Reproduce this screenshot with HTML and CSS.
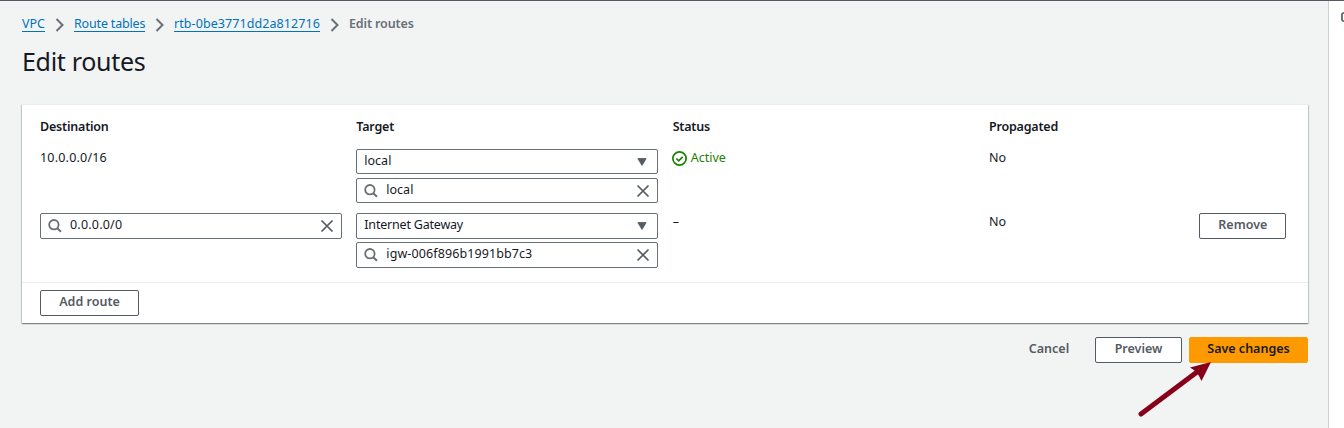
FILE: index.html
```html
<!DOCTYPE html>
<html lang="en">
<head>
<meta charset="utf-8">
<title>Edit routes</title>
<link rel="stylesheet" href="styles.css">
</head>
<body>
<svg class="defs" aria-hidden="true">
  <symbol id="chevron" viewBox="0 0 10 14"><path d="M1.5 1l6 6-6 6" fill="none" stroke="#687078" stroke-width="2"/></symbol>
  <symbol id="search" viewBox="0 0 14 14"><circle cx="5.900" cy="5.700" r="4.700" fill="none" stroke="#687078" stroke-width="1.8"/><path d="M9.2 9.2l3.8 3.5" fill="none" stroke="#687078" stroke-width="2"/></symbol>
  <symbol id="close" viewBox="0 0 14 14"><path d="M1.500 1.500l11 11M12.500 1.500l-11 11" fill="none" stroke="#545b64" stroke-width="1.7"/></symbol>
  <symbol id="caret" viewBox="0 0 10 8"><path d="M.8.5h8.400L5 7.500z" fill="#545b64" stroke="#545b64" stroke-width=".8" stroke-linejoin="round"/></symbol>
</svg>
<div class="app">
  <main class="main">
    <nav class="breadcrumbs">
      <a class="crumb crumb-vpc">VPC</a><svg class="chevron"><use href="#chevron"/></svg>
      <a class="crumb crumb-tables">Route tables</a><svg class="chevron"><use href="#chevron"/></svg>
      <a class="crumb crumb-id">rtb-0be3771dd2a812716</a><svg class="chevron"><use href="#chevron"/></svg>
      <span class="current">Edit routes</span>
    </nav>
    <h1 class="title">Edit routes</h1>
    <section class="card">
      <div class="routes">
        <div class="row head"><span>Destination</span><span>Target</span><span>Status</span><span>Propagated</span></div>
        <div class="row first">
          <div class="cell cidr">10.0.0.0/16</div>
          <div class="stack">
            <div class="field"><span class="value">local</span><svg class="caret"><use href="#caret"/></svg></div>
            <div class="field"><svg class="search"><use href="#search"/></svg><span class="value">local</span><svg class="close"><use href="#close"/></svg></div>
          </div>
          <div class="cell active"><svg class="check" viewBox="0 0 14 14"><circle cx="7" cy="7" r="6.200" fill="none" stroke="#1d8102" stroke-width="1.600"/><path d="M4 7l2.200 2.200L10 5.400" fill="none" stroke="#1d8102" stroke-width="1.600"/></svg><span>Active</span></div>
          <div class="cell">No</div>
        </div>
        <div class="row second">
          <div class="field"><svg class="search"><use href="#search"/></svg><span class="value zero">0.0.0.0/0</span><svg class="close"><use href="#close"/></svg></div>
          <div class="stack">
            <div class="field"><span class="value gateway">Internet Gateway</span><svg class="caret"><use href="#caret"/></svg></div>
            <div class="field"><svg class="search"><use href="#search"/></svg><span class="value igw">igw-006f896b1991bb7c3</span><svg class="close"><use href="#close"/></svg></div>
          </div>
          <div class="cell">–</div>
          <div class="cell">No</div>
          <button class="button remove">Remove</button>
        </div>
      </div>
      <div class="card-footer"><button class="button add">Add route</button></div>
    </section>
    <div class="actions"><button class="button cancel">Cancel</button><button class="button preview">Preview</button><button class="button save">Save changes</button></div>
  </main>
  <aside class="help"><svg class="info" viewBox="0 0 3 10"><path d="M4 1H2L1 2v6l1 1h2" fill="none" stroke="#545b64" stroke-width="1.700"/></svg></aside>
</div>
<svg class="arrow" viewBox="0 0 78 60"><path d="M6 54L62 12" stroke="#870019" stroke-width="5" stroke-linecap="round"/><path d="M76 2L55 7.500l6 4 3 4.500 2.500 5z" fill="#870019"/></svg>
</body>
</html>
```
FILE: styles.css
```css
* { box-sizing: border-box; }
body { margin: 0; overflow: hidden; background: #f2f3f3; color: #16191f; font: 12.5px/20px "Noto Sans", "Open Sans", sans-serif; }
svg { display: block; flex: none; }
.defs { display: none; }
.app { display: flex; height: 428px; border-top: 1px solid #545b64; }
.main { flex: 1; padding: 13px 21px 0 22px; }
.help { width: 15px; background: #fff; box-shadow: -1px 0 #ccd1d1; padding-top: 11px; }
.info { width: 3px; height: 10px; margin-left: auto; }
.breadcrumbs { display: flex; height: 20px; white-space: nowrap; }
.crumb { color: #0073bb; height: 18px; line-height: 19px; border-bottom: 1px solid #0073bb; }
.crumb-vpc { width: 23px; }
.crumb-tables { width: 71px; letter-spacing: -.17px; }
.crumb-id { width: 146px; letter-spacing: .08px; }
.chevron { width: 10px; height: 14px; margin: 4px 9px 0 10px; }
.current { color: #687078; font-weight: 600; line-height: 20px; letter-spacing: -.12px; }
.title { margin: 9px 0 0; font-size: 25px; line-height: 36px; font-weight: 400; letter-spacing: -.3px; }
.card { height: 219px; margin-top: 25px; background: #fff; border-top: 1px solid #eaeded; box-shadow: 0 1px 1px rgba(0,28,36,.3), 1px 1px 1px rgba(0,28,36,.15), -1px 1px 1px rgba(0,28,36,.15); }
.routes { height: 177px; padding: 12px 18px 0; }
.row { display: grid; grid-template-columns: 302px 302px 302px 196px 87px; column-gap: 14.333px; }
.row > * { align-self: start; }
.head { height: 32px; font-weight: 600; letter-spacing: -.2px; }
.first { height: 64px; }
.first .field { height: 25px; }
.first .stack { gap: 4px; }
.cell { margin-top: -1px; }
.cidr, .zero { letter-spacing: .2px; }
.gateway { letter-spacing: -.2px; }
.igw { letter-spacing: .1px; }
.stack { display: flex; flex-direction: column; gap: 3px; }
.field { height: 26px; display: flex; align-items: center; border: 1px solid #687078; border-radius: 2px; padding: 0 7px; background: #fff; }
.value { flex: 1; line-height: 20px; margin-top: -2px; }
.search { width: 14px; height: 14px; margin: 0 8.500px 0 -.5px; }
.close { width: 14px; height: 14px; }
.caret { width: 10px; height: 8px; margin-right: 3px; }
.active { display: flex; gap: 4px; margin-left: -1px; color: #1d8102; }
.check { width: 15px; height: 15px; margin-top: 3px; }
.card-footer { border-top: 1px solid #eaeded; padding: 7px 18px; }
.button { display: block; height: 26px; margin: 0; padding: 0 0 2px; border: 1px solid #545b64; border-radius: 2px; background: #fff; color: #545b64; font: 600 12.5px/20px "Noto Sans", sans-serif; white-space: nowrap; }
.remove { width: 87px; }
.add { width: 99px; }
.actions { display: flex; justify-content: flex-end; margin-top: 14px; }
.cancel { width: 86px; border-color: transparent; background: transparent; margin-right: 3px; }
.preview { width: 87px; margin-right: 7px; }
.save { width: 119px; background: #f90; border-color: #f90; color: #16191f; }
.arrow { position: absolute; left: 1135px; top: 360px; width: 78px; height: 60px; }
```
